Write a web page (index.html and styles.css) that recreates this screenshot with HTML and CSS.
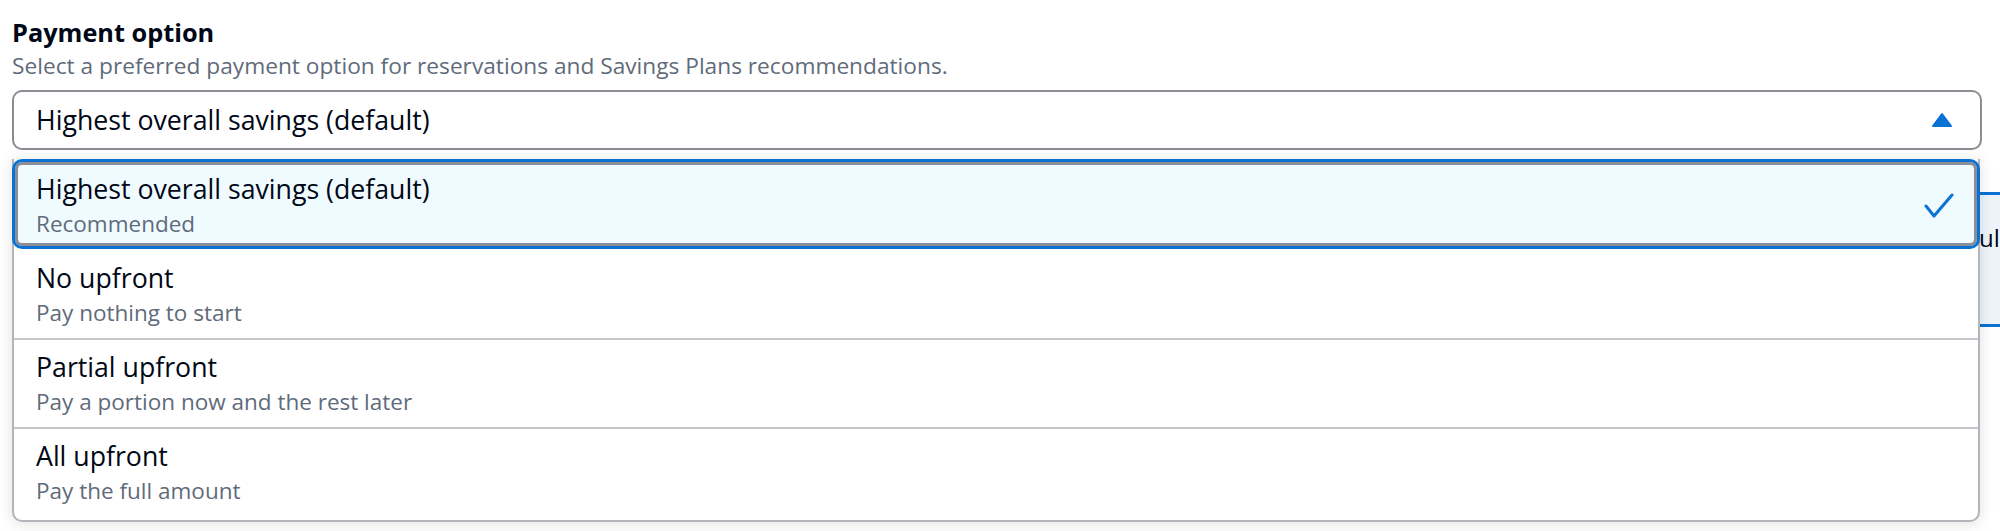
FILE: index.html
```html
<!DOCTYPE html>
<html lang="en">
<head>
<meta charset="utf-8">
<title>Payment option</title>
<link rel="stylesheet" href="styles.css">
</head>
<body>
<div class="page">
  <div class="peek"><span class="peek-text">ul</span></div>
  <div class="field">
    <div class="label">Payment option</div>
    <div class="desc">Select a preferred payment option for reservations and Savings Plans recommendations.</div>
    <div class="select-wrap">
      <div class="select">
        <span class="select-value">Highest overall savings (default)</span>
        <svg class="caret" width="22" height="16" viewBox="0 0 22 16" aria-hidden="true">
          <polygon points="11,2 20,14 2,14" fill="#0972d3" stroke="#0972d3" stroke-width="2" stroke-linejoin="round"/>
        </svg>
      </div>
      <div class="dropdown">
        <div class="option selected">
          <div class="opt-text">
            <div class="opt-label">Highest overall savings (default)</div>
            <div class="opt-desc">Recommended</div>
          </div>
          <svg class="check" width="30" height="26" viewBox="0 0 30 26" aria-hidden="true">
            <polyline points="2,13 10,23 28,2" fill="none" stroke="#0972d3" stroke-width="3" stroke-linecap="round" stroke-linejoin="round"/>
          </svg>
        </div>
        <div class="option after-selected">
          <div class="opt-text">
            <div class="opt-label">No upfront</div>
            <div class="opt-desc">Pay nothing to start</div>
          </div>
        </div>
        <div class="option">
          <div class="opt-text">
            <div class="opt-label">Partial upfront</div>
            <div class="opt-desc">Pay a portion now and the rest later</div>
          </div>
        </div>
        <div class="option">
          <div class="opt-text">
            <div class="opt-label">All upfront</div>
            <div class="opt-desc">Pay the full amount</div>
          </div>
        </div>
      </div>
    </div>
  </div>
</div>
</body>
</html>
```

FILE: styles.css
```css
html, body {
  margin: 0;
  padding: 0;
  background: #ffffff;
  overflow: hidden;
}

body {
  font-family: "Open Sans", "Noto Sans", Arial, sans-serif;
  color: #000716;
}

.page {
  position: relative;
  width: 2000px;
  height: 531px;
  box-sizing: border-box;
  padding: 17px 18px 0 12px;
}

.field {
  position: relative;
  z-index: 1;
}

.label {
  font-size: 25.3px;
  line-height: 30px;
  font-weight: 700;
  color: #000716;
}

.desc {
  margin-top: 5px;
  font-size: 22.7px;
  line-height: 28px;
  color: #5f6b7a;
}

.select-wrap {
  margin-top: 10px;
}

.select {
  height: 60px;
  box-sizing: border-box;
  border: 2px solid #8c8c94;
  border-radius: 10px;
  background: #ffffff;
  padding: 0 27px 0 22px;
  display: flex;
  align-items: center;
  justify-content: space-between;
}

.select-value {
  font-size: 26.7px;
  line-height: 34px;
  color: #000716;
}

.caret {
  display: block;
}

.dropdown {
  position: relative;
  z-index: 2;
  margin-top: 9px;
  margin-right: 2px;
  background: #ffffff;
  border: 2px solid #b4b4bb;
  border-top: none;
  border-radius: 0 0 10px 10px;
  padding-bottom: 4px;
  box-shadow: 0 2px 16px rgba(0, 7, 22, 0.12);
}

.option {
  display: flex;
  align-items: center;
  justify-content: space-between;
  border-top: 2px solid #c6c6cd;
  padding: 9px 22px 8px 22px;
}

.option.after-selected {
  border-top-color: transparent;
}

.option.selected {
  margin: 0 -2px;
  border: 3px solid #0972d3;
  border-radius: 10px;
  box-shadow: inset 0 0 0 3px #8c8c94;
  background: #f0fbff;
  padding: 9px 23px 5px 21px;
}

.opt-label {
  font-size: 26.7px;
  line-height: 36px;
  color: #000716;
}

.opt-desc {
  font-size: 22.5px;
  line-height: 34px;
  color: #5f6b7a;
}

.check {
  display: block;
}

.peek {
  position: absolute;
  left: 1979px;
  top: 192px;
  width: 60px;
  height: 135px;
  box-sizing: border-box;
  border-top: 3px solid #0972d3;
  border-bottom: 3px solid #0972d3;
  background: #edf4fa;
  padding-top: 25px;
  overflow: hidden;
}

.peek-text {
  font-size: 24px;
  line-height: 36px;
  color: #000716;
  white-space: nowrap;
}
```
